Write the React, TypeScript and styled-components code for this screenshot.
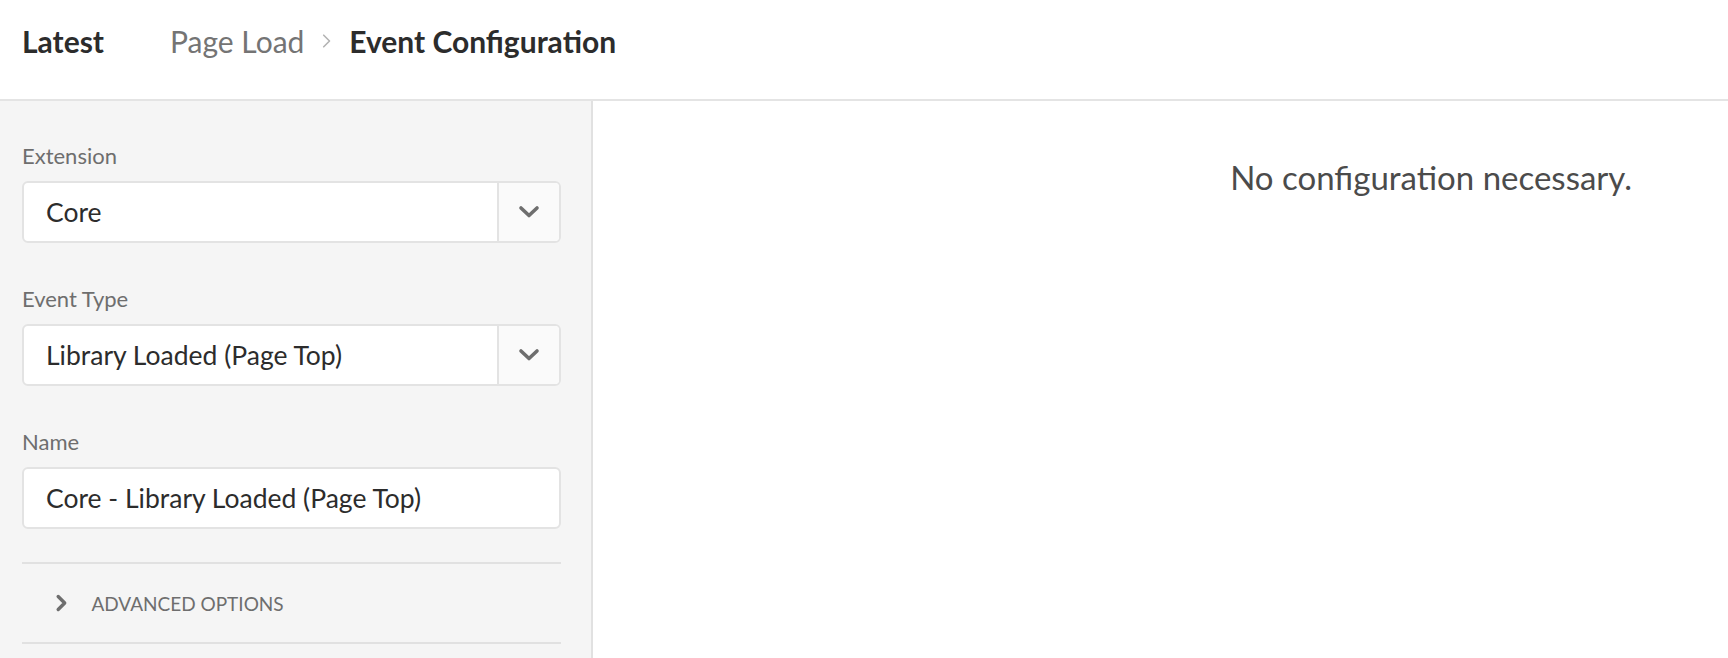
import React from "react";
import styled, { createGlobalStyle } from "styled-components";

const GlobalStyle = createGlobalStyle`
    html, body {
        margin: 0;
        padding: 0;
        height: 100%;
        background: #ffffff;
        font-family: Lato, "Open Sans", sans-serif;
    }
    #root {
        height: 100%;
    }
`;

const Page = styled.div`
    height: 100vh;
    display: flex;
    flex-direction: column;
    overflow: hidden;
`;

const Header = styled.header`
    height: 101px;
    box-sizing: border-box;
    border-bottom: 2px solid #e4e4e4;
    display: flex;
    align-items: flex-start;
    padding: 21px 0 0 22px;
    gap: 66px;
`;

const Title = styled.h1`
    margin: 0;
    font-size: 30px;
    line-height: 40px;
    font-weight: 700;
    color: #2c2c2c;
`;

const Breadcrumbs = styled.nav`
    display: flex;
    align-items: center;
    gap: 16px;
    font-size: 30px;
    line-height: 40px;
`;

const Crumb = styled.span<{ $current?: boolean }>`
    color: ${(p) => (p.$current ? "#2c2c2c" : "#747474")};
    font-weight: ${(p) => (p.$current ? 700 : 400)};
`;

const Body = styled.div`
    flex: 1;
    display: flex;
    min-height: 0;
`;

const Sidebar = styled.aside`
    width: 593px;
    flex-shrink: 0;
    box-sizing: border-box;
    background: #f5f5f5;
    border-right: 2px solid #e1e1e1;
    padding: 41px 30px 0 22px;
    display: flex;
    flex-direction: column;
`;

const Fields = styled.div`
    display: flex;
    flex-direction: column;
    gap: 42px;
    margin-bottom: 33px;
`;

const Field = styled.div`
    display: flex;
    flex-direction: column;
    gap: 11px;
`;

const Label = styled.label`
    font-size: 22px;
    line-height: 28px;
    color: #6e6e6e;
`;

const Box = styled.div`
    height: 62px;
    box-sizing: border-box;
    background: #ffffff;
    border: 2px solid #e3e3e3;
    border-radius: 6px;
    display: flex;
    align-items: stretch;
    overflow: hidden;
`;

const Value = styled.div`
    flex: 1;
    display: flex;
    align-items: center;
    padding-left: 22px;
    font-size: 26.5px;
    color: #2c2c2c;
`;

const DropButton = styled.div`
    width: 60px;
    border-left: 2px solid #e3e3e3;
    background: #fafafa;
    display: flex;
    align-items: center;
    justify-content: center;
`;

const Divider = styled.hr`
    margin: 0;
    border: none;
    border-top: 2px solid #e1e1e1;
`;

const Accordion = styled.div`
    height: 78px;
    display: flex;
    align-items: center;
    gap: 23px;
    padding-left: 32px;
    font-size: 19px;
    color: #6e6e6e;
    text-transform: uppercase;
`;

const Content = styled.main`
    flex: 1;
    display: flex;
    justify-content: flex-end;
    align-items: flex-start;
    padding: 56px 96px 0 0;
`;

const Message = styled.p`
    margin: 0;
    font-size: 33px;
    line-height: 40px;
    color: #4b4b4b;
`;

const ChevronDown = () => (
    <svg width="22" height="14" viewBox="0 0 22 14">
        <path d="M3 3 L11 10.5 L19 3" fill="none" stroke="#6e6e6e" strokeWidth="3.6" strokeLinecap="round" strokeLinejoin="round" />
    </svg>
);

const ChevronRight = ({ size = 18, color = "#6e6e6e", weight = 3.4 }: { size?: number; color?: string; weight?: number }) => (
    <svg width={size * 0.8} height={size} viewBox="0 0 14 18">
        <path d="M4 2.5 L10.5 9 L4 15.5" fill="none" stroke={color} strokeWidth={weight} strokeLinecap="round" strokeLinejoin="round" />
    </svg>
);

const Select = ({ value }: { value: string }) => (
    <Box>
        <Value>{value}</Value>
        <DropButton>
            <ChevronDown />
        </DropButton>
    </Box>
);

export default function App() {
    return (
        <>
            <GlobalStyle />
            <Page>
                <Header>
                    <Title>Latest</Title>
                    <Breadcrumbs>
                        <Crumb>Page Load</Crumb>
                        <ChevronRight size={16} color="#b3b3b3" weight={1.8} />
                        <Crumb $current>Event Configuration</Crumb>
                    </Breadcrumbs>
                </Header>
                <Body>
                    <Sidebar>
                        <Fields>
                            <Field>
                                <Label>Extension</Label>
                                <Select value="Core" />
                            </Field>
                            <Field>
                                <Label>Event Type</Label>
                                <Select value="Library Loaded (Page Top)" />
                            </Field>
                            <Field>
                                <Label>Name</Label>
                                <Box>
                                    <Value>Core - Library Loaded (Page Top)</Value>
                                </Box>
                            </Field>
                        </Fields>
                        <Divider />
                        <Accordion>
                            <ChevronRight />
                            Advanced Options
                        </Accordion>
                        <Divider />
                    </Sidebar>
                    <Content>
                        <Message>No configuration necessary.</Message>
                    </Content>
                </Body>
            </Page>
        </>
    );
}
